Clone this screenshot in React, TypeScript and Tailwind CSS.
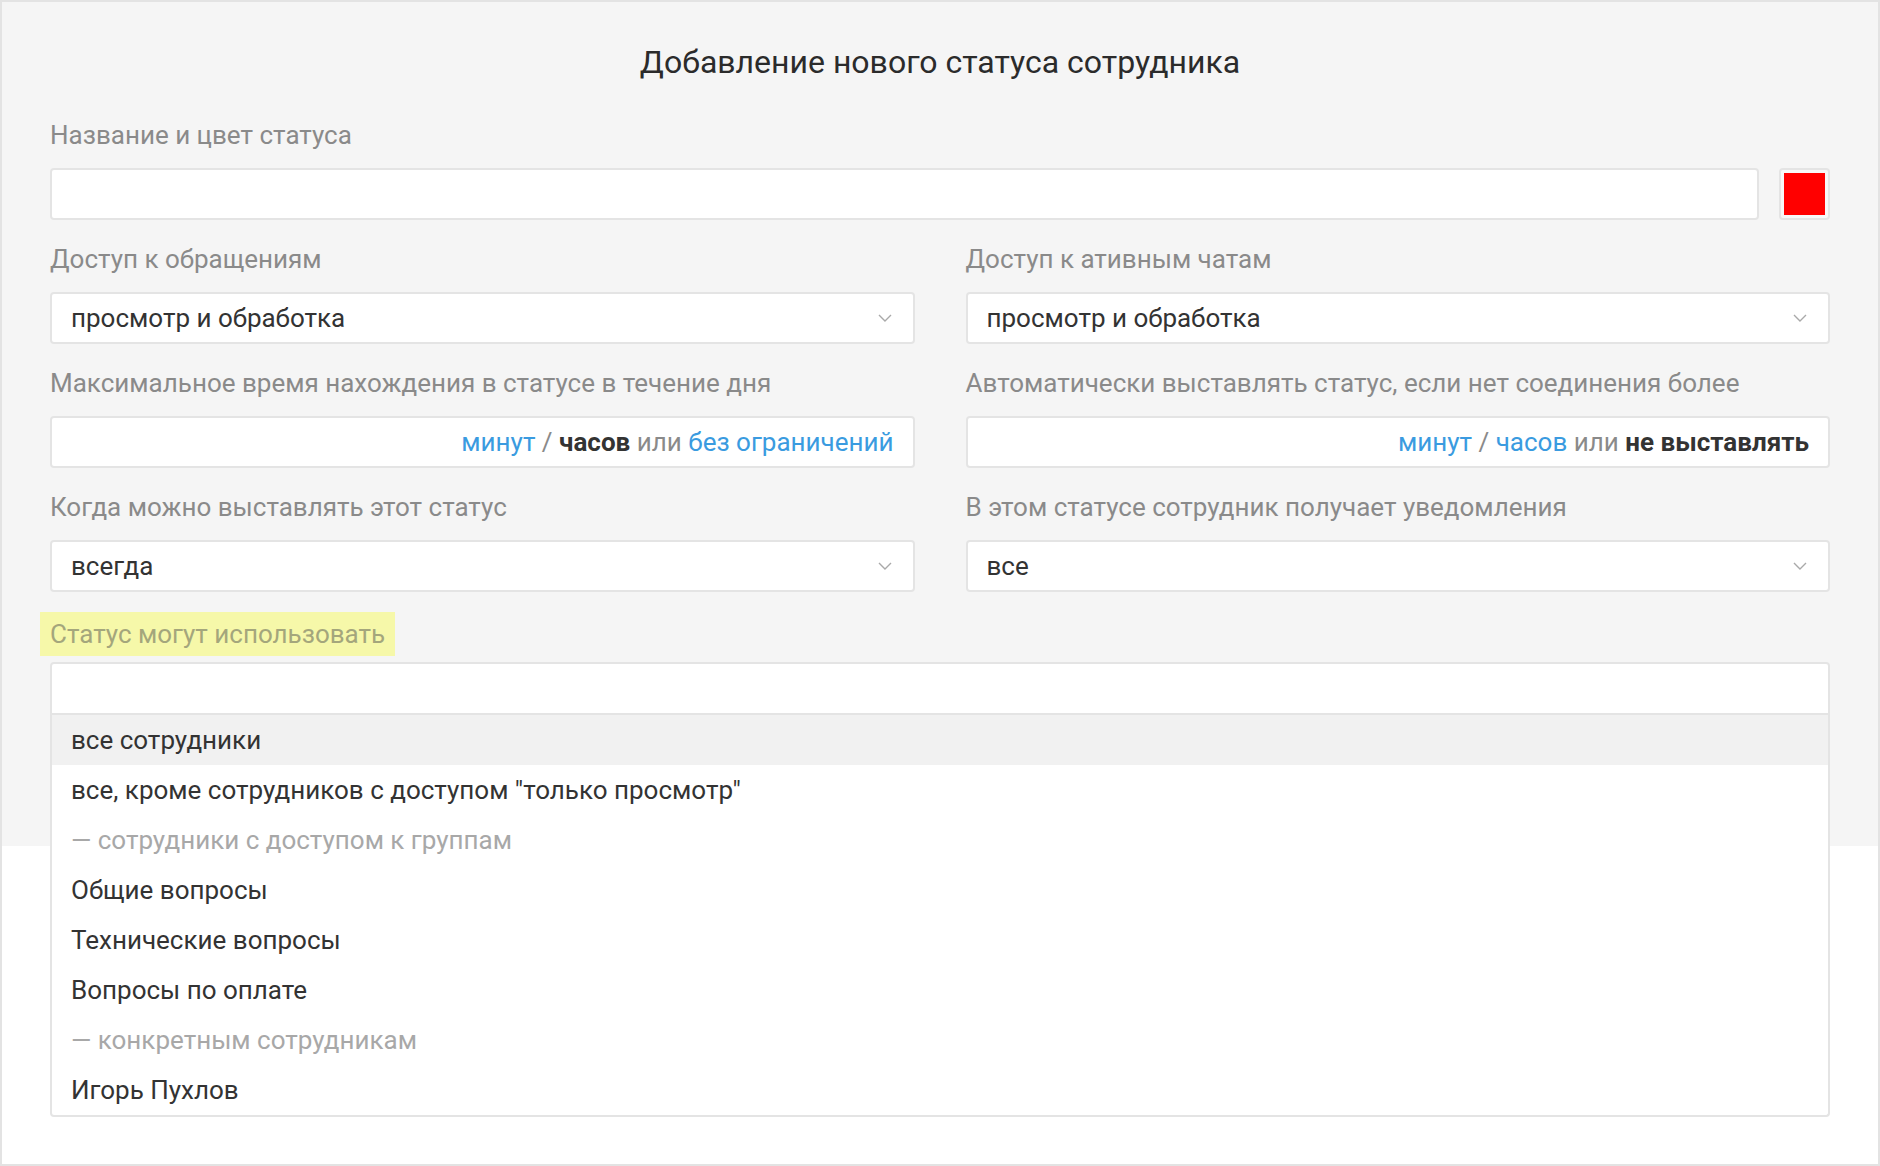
import React from "react";

const font = { fontFamily: "Roboto, 'Noto Sans', Arial, sans-serif" };

function Chevron() {
  return (
    <svg width="14" height="8" viewBox="0 0 14 8" fill="none" className="shrink-0">
      <polyline points="1,1 7,7 13,1" stroke="#a9a9a9" strokeWidth="1.4" />
    </svg>
  );
}

function Label({ children }: { children: React.ReactNode }) {
  return <div className="h-[30px] leading-[30px] text-[26px] text-[#8a8a8a] whitespace-nowrap">{children}</div>;
}

function Select({ value }: { value: string }) {
  return (
    <div className="mt-[18px] h-[52px] bg-white border-2 border-[#e4e4e4] rounded-[4px] flex items-center justify-between pl-[19px] pr-[21px]">
      <span className="text-[26px] text-[#333]">{value}</span>
      <Chevron />
    </div>
  );
}

function TimeInput({ children }: { children: React.ReactNode }) {
  return (
    <div className="mt-[18px] h-[52px] bg-white border-2 border-[#e4e4e4] rounded-[4px] flex items-center justify-end px-[19px] text-[26px] text-[#8a8a8a] whitespace-pre">
      {children}
    </div>
  );
}

const options: { text: string; muted?: boolean; active?: boolean }[] = [
  { text: "все сотрудники", active: true },
  { text: "все, кроме сотрудников с доступом \"только просмотр\"" },
  { text: "— сотрудники с доступом к группам", muted: true },
  { text: "Общие вопросы" },
  { text: "Технические вопросы" },
  { text: "Вопросы по оплате" },
  { text: "— конкретным сотрудникам", muted: true },
  { text: "Игорь Пухлов" },
];

export default function App() {
  return (
    <div style={font} className="w-[1880px] h-[1166px] bg-white border-2 border-[#e3e3e3] overflow-hidden">
      <div className="h-[844px] bg-[#f5f5f5] px-[48px] pt-[40px]">
        <h1 className="h-[40px] leading-[40px] text-center text-[32px] text-[#2b2b2b] font-normal">
          Добавление нового статуса сотрудника
        </h1>

        <div className="mt-[38px]">
          <Label>Название и цвет статуса</Label>
          <div className="mt-[18px] flex gap-[20px]">
            <div className="flex-1 h-[52px] bg-white border-2 border-[#e4e4e4] rounded-[4px]" />
            <div className="w-[51px] h-[52px] border-2 border-[#e4e4e4] rounded-[4px] p-[3px] bg-[#f8f8f8]">
              <div className="w-full h-full bg-[#ff0000]" />
            </div>
          </div>
        </div>

        <div className="mt-[24px] grid grid-cols-2 gap-x-[51px] gap-y-[24px]">
          <div>
            <Label>Доступ к обращениям</Label>
            <Select value="просмотр и обработка" />
          </div>
          <div>
            <Label>Доступ к ативным чатам</Label>
            <Select value="просмотр и обработка" />
          </div>
          <div>
            <Label>Максимальное время нахождения в статусе в течение дня</Label>
            <TimeInput>
              <span className="text-[#3a9be0]">минут</span>
              <span>{" / "}</span>
              <span className="font-bold text-[#333]">часов</span>
              <span>{" или "}</span>
              <span className="text-[#3a9be0]">без ограничений</span>
            </TimeInput>
          </div>
          <div>
            <Label>Автоматически выставлять статус, если нет соединения более</Label>
            <TimeInput>
              <span className="text-[#3a9be0]">минут</span>
              <span>{" / "}</span>
              <span className="text-[#3a9be0]">часов</span>
              <span>{" или "}</span>
              <span className="font-bold text-[#333]">не выставлять</span>
            </TimeInput>
          </div>
          <div>
            <Label>Когда можно выставлять этот статус</Label>
            <Select value="всегда" />
          </div>
          <div>
            <Label>В этом статусе сотрудник получает уведомления</Label>
            <Select value="все" />
          </div>
        </div>

        <div className="mt-[20px]">
          <div className="-ml-[10px] w-fit h-[44px] leading-[44px] px-[10px] bg-[#f6f8a9] text-[26px] text-[#a4a67c]">
            Статус могут использовать
          </div>
          <div className="relative mt-[6px]">
            <div className="h-[53px] bg-white border-2 border-[#e4e4e4] rounded-t-[4px]" />
            <div className="absolute left-0 right-0 top-full z-10 bg-white border-2 border-t-0 border-[#e4e4e4] rounded-b-[4px]">
              {options.map((o) => (
                <div
                  key={o.text}
                  className={`h-[50px] leading-[50px] px-[19px] text-[26px] whitespace-nowrap ${
                    o.active ? "bg-[#f1f1f1]" : ""
                  } ${o.muted ? "text-[#a8a8a8]" : "text-[#333]"}`}
                >
                  {o.text}
                </div>
              ))}
            </div>
          </div>
        </div>
      </div>
    </div>
  );
}
